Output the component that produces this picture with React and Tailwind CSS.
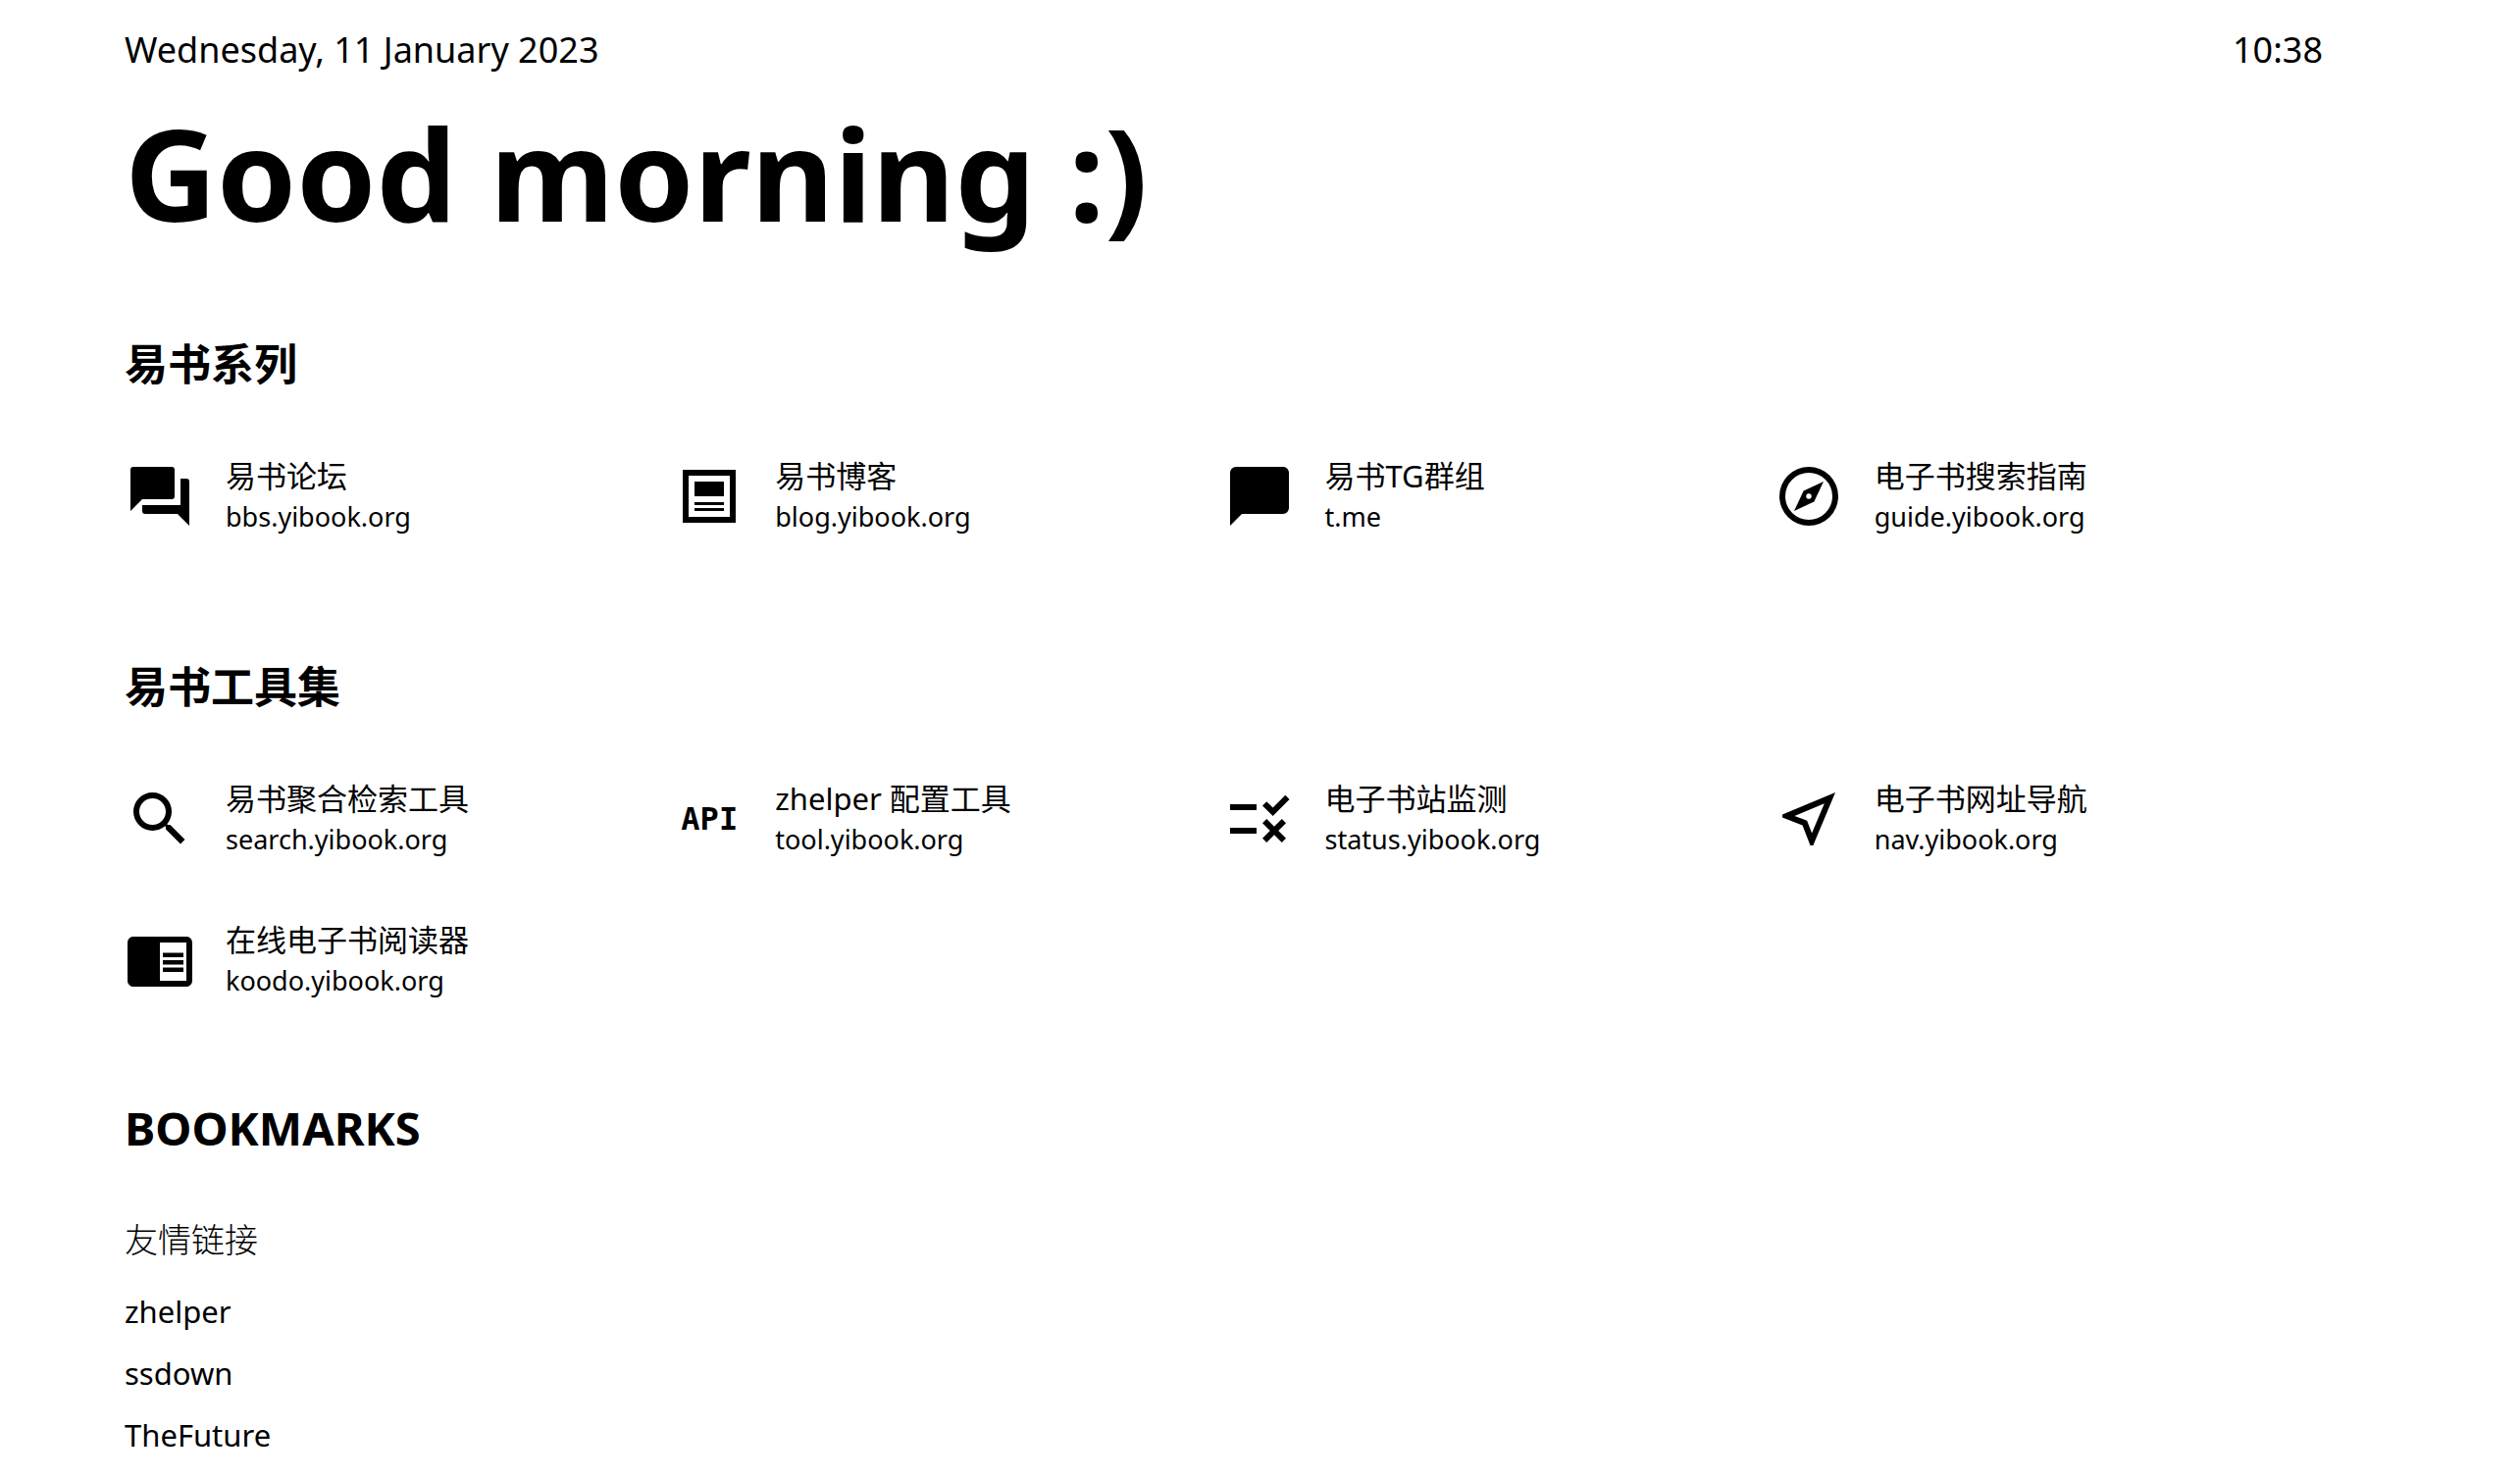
import { MdRule, MdChromeReaderMode } from "react-icons/md";

const paths = {
  forum:
    "M17,12V3A1,1 0 0,0 16,2H3A1,1 0 0,0 2,3V17L6,13H16A1,1 0 0,0 17,12M21,6H19V15H6V17A1,1 0 0,0 7,18H18L22,22V7A1,1 0 0,0 21,6Z",
  post: "M3,3V21H21V3H3M19,19H5V5H19V19M17,12H7V7H17V12M17,15H7V14H17V15M17,17H7V16H17V17Z",
  message: "M20,2H4A2,2 0 0,0 2,4V22L6,18H20A2,2 0 0,0 22,16V4C22,2.89 21.1,2 20,2Z",
  compass:
    "M7,17L10.2,10.2L17,7L13.8,13.8L7,17M12,11.1A0.9,0.9 0 0,0 11.1,12A0.9,0.9 0 0,0 12,12.9A0.9,0.9 0 0,0 12.9,12A0.9,0.9 0 0,0 12,11.1M12,2A10,10 0 0,1 22,12A10,10 0 0,1 12,22A10,10 0 0,1 2,12A10,10 0 0,1 12,2M12,4A8,8 0 0,0 4,12A8,8 0 0,0 12,20A8,8 0 0,0 20,12A8,8 0 0,0 12,4Z",
  magnify:
    "M9.5,3A6.5,6.5 0 0,1 16,9.5C16,11.11 15.41,12.59 14.44,13.73L14.71,14H15.5L20.5,19L19,20.5L14,15.5V14.71L13.73,14.44C12.59,15.41 11.11,16 9.5,16A6.5,6.5 0 0,1 3,9.5A6.5,6.5 0 0,1 9.5,3M9.5,5C7,5 5,7 5,9.5C5,12 7,14 9.5,14C12,14 14,12 14,9.5C14,7 12,5 9.5,5Z",
  navigation:
    "M17.27,6.73L13.03,16.86L11.71,13.44L11.39,12.61L10.57,12.29L7.14,10.97L17.27,6.73M21,3L3,10.53V11.5L9.84,14.16L12.5,21H13.46L21,3Z",
};

const Icon = ({ name }) => (
  <svg viewBox="0 0 24 24" fill="currentColor" className="size-full" aria-hidden="true">
    <path d={paths[name]} />
  </svg>
);

const ApiIcon = () => (
  <span className="flex size-full items-center justify-center font-['DejaVu_Sans_Mono',monospace] text-[32px] leading-none font-bold">
    API
  </span>
);

const series = [
  { name: "易书论坛", host: "bbs.yibook.org", icon: <Icon name="forum" /> },
  { name: "易书博客", host: "blog.yibook.org", icon: <Icon name="post" /> },
  { name: "易书TG群组", host: "t.me", icon: <Icon name="message" /> },
  { name: "电子书搜索指南", host: "guide.yibook.org", icon: <Icon name="compass" /> },
];

const tools = [
  { name: "易书聚合检索工具", host: "search.yibook.org", icon: <Icon name="magnify" /> },
  { name: "zhelper 配置工具", host: "tool.yibook.org", icon: <ApiIcon /> },
  { name: "电子书站监测", host: "status.yibook.org", icon: <MdRule className="size-full" /> },
  { name: "电子书网址导航", host: "nav.yibook.org", icon: <Icon name="navigation" /> },
  { name: "在线电子书阅读器", host: "koodo.yibook.org", icon: <MdChromeReaderMode className="size-full" /> },
];

const bookmarks = ["zhelper", "ssdown", "TheFuture"];

const AppCard = ({ app }) => (
  <a href={`https://${app.host}`} className="flex items-center">
    <span className="size-[72px] shrink-0">{app.icon}</span>
    <span className="ml-[31px] flex flex-col">
      <span className="text-[31px] leading-[41px]">{app.name}</span>
      <span className="text-[27px] leading-[41px]">{app.host}</span>
    </span>
  </a>
);

const AppGrid = ({ apps }) => (
  <div className="grid grid-cols-4 gap-y-[62px]">
    {apps.map((app) => (
      <AppCard key={app.host} app={app} />
    ))}
  </div>
);

const App = () => {
  return (
    <main className="bg-white pt-6 pr-[201px] pl-[127px] font-['Noto_Sans','Noto_Sans_CJK_SC',sans-serif] text-black">
      <header>
        <div className="flex justify-between text-[36px] leading-[54px]">
          <p>Wednesday, 11 January 2023</p>
          <time>10:38</time>
        </div>
        <h1 className="mt-2 text-[130px] leading-[180px] font-bold">Good morning :)</h1>
      </header>

      <section className="mt-[73px]">
        <h2 className="mb-[62px] text-[44px] leading-16 font-bold">易书系列</h2>
        <AppGrid apps={series} />
      </section>

      <section className="mt-[121px]">
        <h2 className="mb-[62px] text-[44px] leading-16 font-bold">易书工具集</h2>
        <AppGrid apps={tools} />
      </section>

      <section className="mt-[98px]">
        <h2 className="mb-[62px] text-[47px] leading-16 font-bold">BOOKMARKS</h2>
        <h3 className="text-[34px] leading-10 font-light">友情链接</h3>
        <ul className="mt-[22px]">
          {bookmarks.map((name) => (
            <li key={name} className="text-[31px] leading-[63px]">
              <a href={`#${name}`}>{name}</a>
            </li>
          ))}
        </ul>
      </section>
    </main>
  );
};

export default App;
